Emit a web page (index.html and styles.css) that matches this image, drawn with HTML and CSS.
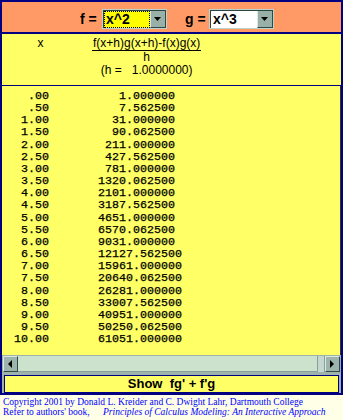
FILE: index.html
```html
<!DOCTYPE html>
<html lang="en">
<head>
  <meta charset="UTF-8">
  <meta name="viewport" content="width=device-width, initial-scale=1.0">
  <title>Product Rule Difference Quotient</title>
  <link rel="stylesheet" href="styles.css">
</head>
<body>
  <div class="applet">
    <div class="topbar">
      <span class="lbl lbl-f">f =</span>
      <div class="combo">
        <span class="val val-focus">x^2</span>
        <span class="drop"><svg width="8" height="5" viewBox="0 0 8 5"><path d="M0 0H7L3.5 4Z" fill="#000"/></svg></span>
      </div>
      <span class="lbl lbl-g">g =</span>
      <div class="combo">
        <span class="val">x^3</span>
        <span class="drop"><svg width="8" height="5" viewBox="0 0 8 5"><path d="M0 0H7L3.5 4Z" fill="#000"/></svg></span>
      </div>
    </div>

    <div class="formula">
      <div class="xhead">x</div>
      <div class="frac">
        <div class="num">f(x+h)g(x+h)-f(x)g(x)</div>
        <div class="den">h</div>
        <div class="hval">(h =&nbsp;&nbsp; 1.0000000)</div>
      </div>
    </div>

    <div class="output">
<pre class="table">  .00          1.000000
  .50          7.562500
 1.00         31.000000
 1.50         90.062500
 2.00        211.000000
 2.50        427.562500
 3.00        781.000000
 3.50       1320.062500
 4.00       2101.000000
 4.50       3187.562500
 5.00       4651.000000
 5.50       6570.062500
 6.00       9031.000000
 6.50       12127.562500
 7.00       15961.000000
 7.50       20640.062500
 8.00       26281.000000
 8.50       33007.562500
 9.00       40951.000000
 9.50       50250.062500
10.00       61051.000000</pre>
    </div>

    <div class="hscroll">
      <span class="sbtn"><svg width="5" height="9" viewBox="0 0 5 9"><path d="M4 0V8L0 4Z" fill="#000"/></svg></span>
      <span class="thumb"></span>
      <span class="trough"></span>
      <span class="sbtn"><svg width="5" height="9" viewBox="0 0 5 9"><path d="M0 0V8L4 4Z" fill="#000"/></svg></span>
    </div>

    <div class="btnrow">
      <div class="showbtn">Show&nbsp; fg' + f'g</div>
    </div>
  </div>

  <div class="credits">
    <div>Copyright 2001 by Donald L. Kreider and C. Dwight Lahr, Dartmouth College</div>
    <div>Refer to authors' book, <i class="book">Principles of Calculus Modeling: An Interactive Approach</i></div>
  </div>
</body>
</html>
```

FILE: styles.css
```css
body {
  margin: 0;
  background-color: #ffffe8;
  font-family: "Liberation Sans", Arial, sans-serif;
}
.applet {
  width: 343px;
  box-sizing: border-box;
  border: 2px solid #000080;
  background-color: #ffff66;
}
.topbar {
  height: 32px;
  box-sizing: border-box;
  padding-top: 4px;
  background-color: #ff9966;
  border-bottom: 2px solid #000080;
  display: flex;
  align-items: center;
}
.lbl {
  font-size: 14px;
  font-weight: bold;
  color: #000;
}
.lbl-f {
  margin-left: 78px;
  width: 22px;
}
.lbl-g {
  margin-left: 18px;
  width: 24px;
}
.combo {
  width: 65px;
  height: 20px;
  box-sizing: border-box;
  border: 1px solid #bcd4cc;
  box-shadow: inset 1px 1px 0 #2c4444;
  display: flex;
  padding: 1px 0 0 1px;
}
.val {
  flex: 1;
  background-color: #fff;
  font-size: 14px;
  font-weight: bold;
  line-height: 17px;
  padding-left: 2px;
}
.val-focus {
  background-color: #ffff00;
  outline: 1px dotted #000;
  outline-offset: -1px;
}
.drop {
  width: 16px;
  box-sizing: border-box;
  background-color: #98b0a8;
  border-right: 1px solid #304848;
  border-bottom: 1px solid #304848;
  border-left: 1px solid #dce8e4;
  display: flex;
  align-items: center;
  justify-content: center;
}
.formula {
  display: flex;
  padding: 2px 0 8px;
  border-bottom: 1px solid #000080;
  font-size: 12px;
}
.xhead {
  width: 77px;
  text-align: center;
  line-height: 14px;
}
.frac {
  margin-left: 13px;
  display: flex;
  flex-direction: column;
  align-items: center;
}
.num {
  line-height: 14px;
  padding: 0 1px;
  border-bottom: 1px solid #000;
}
.den {
  line-height: 12px;
}
.hval {
  line-height: 14px;
}
.output {
  height: 269px;
  overflow: hidden;
  border-right: 1px solid #303030;
}
.table {
  margin: 0;
  padding: 4px 0 0 12px;
  font-family: "Liberation Mono", "Courier New", monospace;
  font-size: 11.67px;
  line-height: 12.15px;
  color: #000;
  -webkit-text-stroke: 0.25px #000;
}
.hscroll {
  display: flex;
  height: 17px;
  box-sizing: border-box;
  padding: 1px 1px 0;
  background-color: #9cb4ac;
}
.sbtn {
  width: 15px;
  box-sizing: border-box;
  background-color: #9cb4ac;
  border-right: 1px solid #304848;
  border-bottom: 1px solid #304848;
  border-top: 1px solid #dce8e4;
  border-left: 1px solid #dce8e4;
  display: flex;
  align-items: center;
  justify-content: center;
}
.thumb {
  width: 299px;
  background-color: #cce2cc;
  border-bottom: 1px solid #88a098;
}
.trough {
  flex: 1;
  background-color: #c4d8d0;
  border-left: 1px solid #88a098;
  border-right: 1px solid #88a098;
}
.btnrow {
  padding: 3px 2px 0;
  background-color: #9cb4ac;
}
.showbtn {
  height: 16px;
  border: 1px solid #000080;
  background-color: #ffff66;
  text-align: center;
  font-size: 13px;
  font-weight: bold;
  line-height: 16px;
}
.credits {
  padding: 2px 0 0 3px;
  font-family: "Liberation Serif", "Times New Roman", serif;
  font-size: 9.5px;
  line-height: 10px;
  color: #0000ff;
}
.book {
  margin-left: 11px;
}
```
